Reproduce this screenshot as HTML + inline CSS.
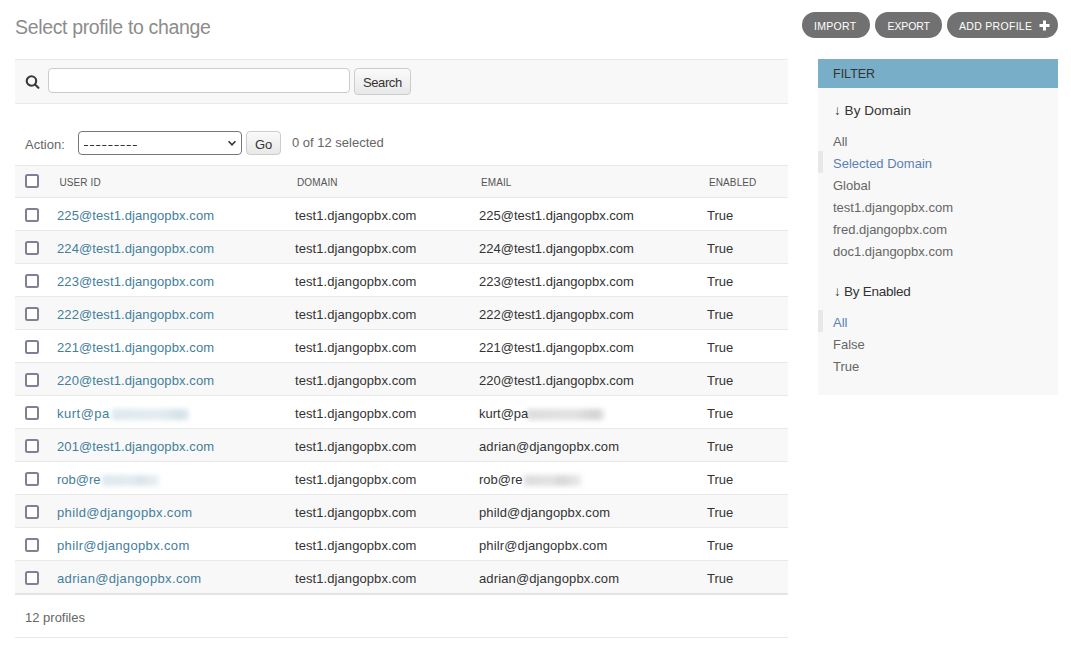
<!DOCTYPE html>
<html><head><meta charset="utf-8">
<style>
html,body{margin:0;padding:0;background:#fff;width:1071px;height:652px;overflow:hidden;position:relative;font-family:"Liberation Sans",sans-serif;color:#333;}
.a{position:absolute;}
.t{position:absolute;white-space:nowrap;line-height:1;}
.title{left:15px;top:17.5px;font-size:19.5px;letter-spacing:-0.35px;color:#8c8c8c;}
.btn{position:absolute;top:12px;height:26px;border-radius:13px;background:#717171;}
.btxt{position:absolute;top:21px;font-size:10.5px;color:#fff;white-space:nowrap;line-height:1;letter-spacing:0.3px;}
.toolbar{left:15px;top:59px;width:773px;height:43px;background:#f8f8f8;border-top:1px solid #eaeaea;border-bottom:1px solid #eaeaea;}
.input{left:48px;top:68px;width:300px;height:23px;border:1px solid #ccc;border-radius:4px;background:#fff;}
.sbtn{left:354px;top:68px;width:55px;height:25px;border:1px solid #ccc;border-radius:4px;background:linear-gradient(#fafafa,#e8e8e8);}
.sel{left:78px;top:131px;width:162px;height:22px;border:1px solid #767676;border-radius:4px;background:#fff;}
.gobtn{left:246px;top:131px;width:33px;height:22px;border:1px solid #ccc;border-radius:4px;background:linear-gradient(#fafafa,#e8e8e8);}
.thead{left:15px;top:165px;width:773px;height:31px;background:#f8f8f8;border-top:1px solid #e8e8e8;border-bottom:1px solid #e8e8e8;}
.row{position:absolute;left:15px;width:773px;height:32px;border-bottom:1px solid #e8e8e8;}
.row.even{background:#f8f8f8;}
.cb{position:absolute;left:25px;width:10px;height:10px;border:2px solid #7f7f95;border-radius:2.5px;background:#fff;}
.th{position:absolute;top:178px;font-size:10px;color:#555;white-space:nowrap;line-height:1;letter-spacing:0.1px;}
.td{position:absolute;font-size:13px;color:#333;white-space:nowrap;line-height:1;}
.lnk{color:#447e9b;}
.bl{position:absolute;filter:blur(2.5px);}
.filter{left:818px;top:59px;width:240px;height:336px;background:#f8f8f8;}
.fh{left:818px;top:59px;width:240px;height:29px;background:#79aec8;}
.fitem{position:absolute;left:833px;font-size:13px;color:#666;white-space:nowrap;line-height:1;}
.fsel{color:#5b80b2;}
.fbar{position:absolute;left:818px;width:5px;height:22px;background:#e8e8e8;}
.fh3{position:absolute;left:834px;font-size:13.5px;letter-spacing:-0.25px;color:#333;white-space:nowrap;line-height:1;}
</style></head><body>
<div class="t title">Select profile to change</div>

<div class="btn" style="left:802px;width:68px"></div>
<div class="btxt" style="left:814px">IMPORT</div>
<div class="btn" style="left:875px;width:67px"></div>
<div class="btxt" style="left:887.5px;letter-spacing:-0.1px">EXPORT</div>
<div class="btn" style="left:947px;width:111px"></div>
<div class="btxt" style="left:959px">ADD PROFILE</div>
<svg class="a" style="left:1039px;top:20px" width="11" height="11" viewBox="0 0 11 11"><path d="M5.5 0.5V10.5M0.5 5.5H10.5" stroke="#fff" stroke-width="3"/></svg>

<div class="a toolbar"></div>
<svg class="a" style="left:24px;top:74px" width="17" height="17" viewBox="0 0 17 17"><circle cx="7.45" cy="7" r="4.75" fill="none" stroke="#3a3a3a" stroke-width="2.1"/><path d="M11 10.5L14.4 13.8" stroke="#3a3a3a" stroke-width="2.2" stroke-linecap="round"/></svg>
<div class="a input"></div>
<div class="a sbtn"></div>
<div class="t" style="left:363px;top:76px;font-size:13px;letter-spacing:-0.4px;color:#333">Search</div>

<div class="t" style="left:25px;top:138px;font-size:13px;color:#666">Action:</div>
<div class="a sel"></div>
<svg class="a" style="left:83px;top:144px" width="56" height="3" viewBox="0 0 56 3"><path d="M1 1.5H54.5" stroke="#333" stroke-width="1" stroke-dasharray="4.1 2"/></svg>
<svg class="a" style="left:227px;top:140px" width="10" height="7" viewBox="0 0 10 7"><path d="M1.6 1.3L5 4.9L8.4 1.3" fill="none" stroke="#333" stroke-width="1.6"/></svg>
<div class="a gobtn"></div>
<div class="t" style="left:255px;top:138px;font-size:13px;color:#333">Go</div>
<div class="t" style="left:292px;top:136px;font-size:13px;color:#666">0 of 12 selected</div>

<div class="a thead"></div>
<div class="cb" style="top:174px"></div>
<div class="th" style="left:59.5px">USER ID</div>
<div class="th" style="left:297px">DOMAIN</div>
<div class="th" style="left:481px">EMAIL</div>
<div class="th" style="left:709px">ENABLED</div>

<div class="row" style="top:198px"></div>
<div class="row even" style="top:231px"></div>
<div class="row" style="top:264px"></div>
<div class="row even" style="top:297px"></div>
<div class="row" style="top:330px"></div>
<div class="row even" style="top:363px"></div>
<div class="row" style="top:396px"></div>
<div class="row even" style="top:429px"></div>
<div class="row" style="top:462px"></div>
<div class="row even" style="top:495px"></div>
<div class="row" style="top:528px"></div>
<div class="row even" style="top:561px"></div>

<div class="cb" style="top:208px"></div>
<div class="cb" style="top:241px"></div>
<div class="cb" style="top:274px"></div>
<div class="cb" style="top:307px"></div>
<div class="cb" style="top:340px"></div>
<div class="cb" style="top:373px"></div>
<div class="cb" style="top:406px"></div>
<div class="cb" style="top:439px"></div>
<div class="cb" style="top:472px"></div>
<div class="cb" style="top:505px"></div>
<div class="cb" style="top:538px"></div>
<div class="cb" style="top:571px"></div>

<div class="td lnk" style="left:57px;top:209px;letter-spacing:0.1px">225@test1.djangopbx.com</div>
<div class="td" style="left:295px;top:209px;letter-spacing:0.08px">test1.djangopbx.com</div>
<div class="td" style="left:479px;top:209px">225@test1.djangopbx.com</div>
<div class="td" style="left:707px;top:209px">True</div>

<div class="td lnk" style="left:57px;top:242px;letter-spacing:0.1px">224@test1.djangopbx.com</div>
<div class="td" style="left:295px;top:242px;letter-spacing:0.08px">test1.djangopbx.com</div>
<div class="td" style="left:479px;top:242px">224@test1.djangopbx.com</div>
<div class="td" style="left:707px;top:242px">True</div>

<div class="td lnk" style="left:57px;top:275px;letter-spacing:0.1px">223@test1.djangopbx.com</div>
<div class="td" style="left:295px;top:275px;letter-spacing:0.08px">test1.djangopbx.com</div>
<div class="td" style="left:479px;top:275px">223@test1.djangopbx.com</div>
<div class="td" style="left:707px;top:275px">True</div>

<div class="td lnk" style="left:57px;top:308px;letter-spacing:0.1px">222@test1.djangopbx.com</div>
<div class="td" style="left:295px;top:308px;letter-spacing:0.08px">test1.djangopbx.com</div>
<div class="td" style="left:479px;top:308px">222@test1.djangopbx.com</div>
<div class="td" style="left:707px;top:308px">True</div>

<div class="td lnk" style="left:57px;top:341px;letter-spacing:0.1px">221@test1.djangopbx.com</div>
<div class="td" style="left:295px;top:341px;letter-spacing:0.08px">test1.djangopbx.com</div>
<div class="td" style="left:479px;top:341px">221@test1.djangopbx.com</div>
<div class="td" style="left:707px;top:341px">True</div>

<div class="td lnk" style="left:57px;top:374px;letter-spacing:0.1px">220@test1.djangopbx.com</div>
<div class="td" style="left:295px;top:374px;letter-spacing:0.08px">test1.djangopbx.com</div>
<div class="td" style="left:479px;top:374px">220@test1.djangopbx.com</div>
<div class="td" style="left:707px;top:374px">True</div>

<div class="td lnk" style="left:57px;top:407px;letter-spacing:0.5px">kurt@pa</div>
<div class="bl" style="left:112px;top:409px;width:77px;height:11px;background:linear-gradient(90deg,rgba(68,126,155,0.18),rgba(68,126,155,0.15) 60%,rgba(68,126,155,0.24) 90%,rgba(68,126,155,0.14))"></div>
<div class="td" style="left:295px;top:407px;letter-spacing:0.08px">test1.djangopbx.com</div>
<div class="td" style="left:479px;top:407px">kurt@pa</div>
<div class="bl" style="left:527px;top:409px;width:77px;height:11px;background:linear-gradient(90deg,rgba(51,51,51,0.17),rgba(51,51,51,0.14) 60%,rgba(51,51,51,0.22) 90%,rgba(51,51,51,0.13))"></div>
<div class="td" style="left:707px;top:407px">True</div>

<div class="td lnk" style="left:57px;top:440px;letter-spacing:0.1px">201@test1.djangopbx.com</div>
<div class="td" style="left:295px;top:440px;letter-spacing:0.08px">test1.djangopbx.com</div>
<div class="td" style="left:479px;top:440px;letter-spacing:0.13px">adrian@djangopbx.com</div>
<div class="td" style="left:707px;top:440px">True</div>

<div class="td lnk" style="left:57px;top:473px">rob@re</div>
<div class="bl" style="left:102px;top:475px;width:57px;height:11px;background:linear-gradient(90deg,rgba(68,126,155,0.18),rgba(68,126,155,0.15) 50%,rgba(68,126,155,0.21) 65%,rgba(68,126,155,0.10))"></div>
<div class="td" style="left:295px;top:473px;letter-spacing:0.08px">test1.djangopbx.com</div>
<div class="td" style="left:479px;top:473px">rob@re</div>
<div class="bl" style="left:524px;top:475px;width:57px;height:11px;background:linear-gradient(90deg,rgba(51,51,51,0.17),rgba(51,51,51,0.14) 50%,rgba(51,51,51,0.20) 65%,rgba(51,51,51,0.10))"></div>
<div class="td" style="left:707px;top:473px">True</div>

<div class="td lnk" style="left:57px;top:506px;letter-spacing:0.35px">phild@djangopbx.com</div>
<div class="td" style="left:295px;top:506px;letter-spacing:0.08px">test1.djangopbx.com</div>
<div class="td" style="left:479px;top:506px;letter-spacing:0.13px">phild@djangopbx.com</div>
<div class="td" style="left:707px;top:506px">True</div>

<div class="td lnk" style="left:57px;top:539px;letter-spacing:0.35px">philr@djangopbx.com</div>
<div class="td" style="left:295px;top:539px;letter-spacing:0.08px">test1.djangopbx.com</div>
<div class="td" style="left:479px;top:539px;letter-spacing:0.13px">philr@djangopbx.com</div>
<div class="td" style="left:707px;top:539px">True</div>

<div class="td lnk" style="left:57px;top:572px;letter-spacing:0.35px">adrian@djangopbx.com</div>
<div class="td" style="left:295px;top:572px;letter-spacing:0.08px">test1.djangopbx.com</div>
<div class="td" style="left:479px;top:572px;letter-spacing:0.13px">adrian@djangopbx.com</div>
<div class="td" style="left:707px;top:572px">True</div>

<div class="a" style="left:15px;top:593px;width:773px;height:2px;background:#e4e4e4"></div>
<div class="t" style="left:25px;top:611px;font-size:13px;color:#666">12 profiles</div>
<div class="a" style="left:15px;top:637px;width:773px;height:1px;background:#e8e8e8"></div>

<div class="a filter"></div>
<div class="a fh"></div>
<div class="t" style="left:833px;top:68px;font-size:12.5px;color:#333;letter-spacing:0px">FILTER</div>
<div class="fh3" style="top:104px;letter-spacing:0.05px">&#8595; By Domain</div>
<div class="fitem" style="top:135px">All</div>
<div class="fbar" style="top:151px"></div>
<div class="fitem fsel" style="top:157px">Selected Domain</div>
<div class="fitem" style="top:179px">Global</div>
<div class="fitem" style="top:201px">test1.djangopbx.com</div>
<div class="fitem" style="top:223px">fred.djangopbx.com</div>
<div class="fitem" style="top:245px">doc1.djangopbx.com</div>
<div class="fh3" style="top:285px">&#8595; By Enabled</div>
<div class="fbar" style="top:310px"></div>
<div class="fitem fsel" style="top:316px">All</div>
<div class="fitem" style="top:338px">False</div>
<div class="fitem" style="top:360px">True</div>
</body></html>
